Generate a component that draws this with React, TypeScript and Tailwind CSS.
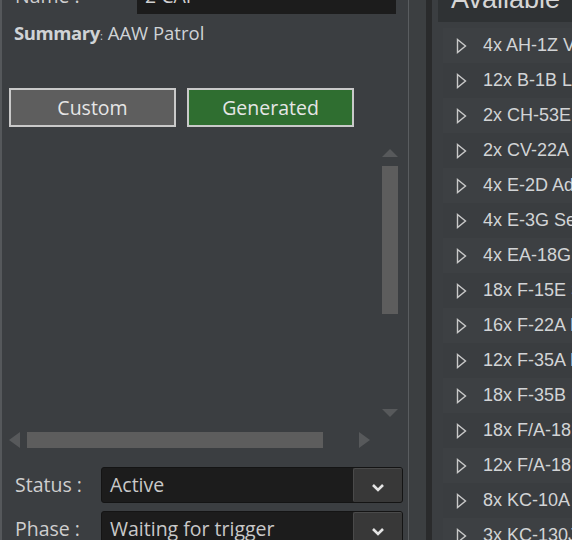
import React from 'react';

const uiFont = { fontFamily: '"Open Sans", "Noto Sans", sans-serif' };
const listFont = { fontFamily: '"Liberation Sans", Arial, sans-serif' };

const available = [
  '4x AH-1Z Viper',
  '12x B-1B Lancer',
  '2x CH-53E Super Stallion',
  '2x CV-22A Osprey',
  '4x E-2D Advanced Hawkeye',
  '4x E-3G Sentry',
  '4x EA-18G Growler',
  '18x F-15E Strike Eagle',
  '16x F-22A Raptor',
  '12x F-35A Lightning II',
  '18x F-35B Lightning II',
  '18x F/A-18E Super Hornet',
  '12x F/A-18F Super Hornet',
  '8x KC-10A Extender',
  '3x KC-130J Hercules',
];

function Arrow({ dir, className }: { dir: 'up' | 'down' | 'left' | 'right'; className?: string }) {
  const pts = {
    up: '0,8 8,0 16,8',
    down: '0,0 16,0 8,8',
    left: '11,0 11,16 0,8',
    right: '0,0 0,16 11,8',
  }[dir];
  const vertical = dir === 'up' || dir === 'down';
  return (
    <svg
      width={vertical ? 16 : 11}
      height={vertical ? 8 : 16}
      viewBox={vertical ? '0 0 16 8' : '0 0 11 16'}
      className={`shrink-0 ${className ?? ''}`}
    >
      <polygon points={pts} fill="#57595b" />
    </svg>
  );
}

function Combo({ label, value }: { label: string; value: string }) {
  return (
    <div className="flex h-[36px] shrink-0 items-center">
      <span className="w-[99px] pl-[13px] text-[19.5px] text-[#cfcfcf] whitespace-nowrap">{label}</span>
      <div className="flex h-full w-[302px] rounded-[3px] border border-[#141414] bg-[#1c1c1c]">
        <span className="flex-1 pl-[8px] text-[19.5px] leading-[34px] text-[#c9c9c9] whitespace-nowrap">{value}</span>
        <div className="flex w-[49px] items-center justify-center rounded-[2px] border-l border-t border-[#4a4a4a] bg-[#383838]">
          <svg width="14" height="10" viewBox="0 0 14 10" className="mt-[4px]">
            <path d="M2 2 L7 7 L12 2" fill="none" stroke="#e4e4e4" strokeWidth="2.6" />
          </svg>
        </div>
      </div>
    </div>
  );
}

function MissionPanel() {
  return (
    <div className="flex w-[409px] shrink-0 flex-col border-l-2 border-r border-l-[#55585b] border-r-[#5a5d60] bg-[#3b3e41]" style={uiFont}>
      {/* name row, scrolled partly out of view */}
      <div className="mt-[-22px] flex h-[36px] shrink-0 items-center">
        <span className="w-[135px] pl-[13px] text-[19.5px] text-[#cfcfcf]">Name :</span>
        <div className="flex h-full w-[259px] items-center bg-[#1c1c1c] pl-[8px] text-[19.5px] text-[#d0d0d0]">2 CAP</div>
      </div>

      <div className="mt-[6px] h-[26px] shrink-0 pl-[12px] text-[18.5px] leading-[26px] text-[#cfd3d6] whitespace-nowrap">
        <span className="font-bold tracking-[-0.4px]">Summary</span>
        <span className="text-[11px]">:</span> AAW Patrol
      </div>

      <div className="mt-[42px] flex shrink-0 gap-[11px] pl-[7px]">
        <button className="h-[39px] w-[167px] border-2 border-[#c9c9c9] bg-[#5e5e5e] text-[19.5px] text-[#e6e6e6]">Custom</button>
        <button className="h-[39px] w-[167px] border-2 border-[#c9c9c9] bg-[#2f6e30] text-[19.5px] text-[#e6e6e6]">Generated</button>
      </div>

      {/* empty scroll view */}
      <div className="mt-[17px] ml-[7px] grid h-[304px] w-[389px] shrink-0 grid-cols-[1fr_16px] grid-rows-[1fr_16px] gap-x-[9px] gap-y-[8px]">
        <div />
        <div className="flex flex-col items-center">
          <Arrow dir="up" className="mt-[5px]" />
          <div className="mt-[9px] h-[148px] w-full bg-[#5d5d5d]" />
          <div className="flex-1" />
          <Arrow dir="down" className="mb-[7px]" />
        </div>
        <div className="flex items-center">
          <Arrow dir="left" />
          <div className="ml-[7px] h-[16px] w-[296px] bg-[#5d5d5d]" />
          <div className="flex-1" />
          <Arrow dir="right" className="mr-[3px]" />
        </div>
        <div />
      </div>

      <div className="mt-[19px] flex shrink-0 flex-col gap-[8px]">
        <Combo label="Status :" value="Active" />
        <Combo label="Phase :" value="Waiting for trigger" />
      </div>
    </div>
  );
}

function AvailablePanel() {
  return (
    <div className="flex min-w-0 flex-1 flex-col bg-[#3b3e41] pl-[6px]">
      <div className="mt-[-19px] h-[41px] shrink-0 bg-[#2f3234] pl-[13px] pt-[3px] text-[27px] leading-[30px] text-[#d6d6d6] whitespace-nowrap" style={listFont}>
        Available
      </div>
      <div className="mt-[6px] flex shrink-0 flex-col pl-[5px]">
        {available.map((name, i) => (
          <div
            key={name}
            className={`flex h-[35px] shrink-0 items-center whitespace-nowrap ${i % 2 === 0 ? 'bg-[#3d4043]' : 'bg-[#3a3d40]'}`}
          >
            <svg width="11" height="16" viewBox="0 0 11 16" className="ml-[13px] shrink-0">
              <path d="M1.5 1.5 L9.5 8 L1.5 14.5 Z" fill="none" stroke="#c9c9c9" strokeWidth="1.4" />
            </svg>
            <span className="ml-[16px] text-[18px] text-[#d2d4d6]" style={listFont}>
              {name}
            </span>
          </div>
        ))}
      </div>
    </div>
  );
}

export default function App() {
  return (
    <div className="flex h-[540px] w-[572px] overflow-hidden bg-[#3b3e41]">
      <MissionPanel />
      {/* splitter between the panels */}
      <div className="w-[17px] shrink-0 bg-[#3c3f41]" />
      <div className="w-[6px] shrink-0 bg-[#2a2b2c]" />
      <AvailablePanel />
    </div>
  );
}
